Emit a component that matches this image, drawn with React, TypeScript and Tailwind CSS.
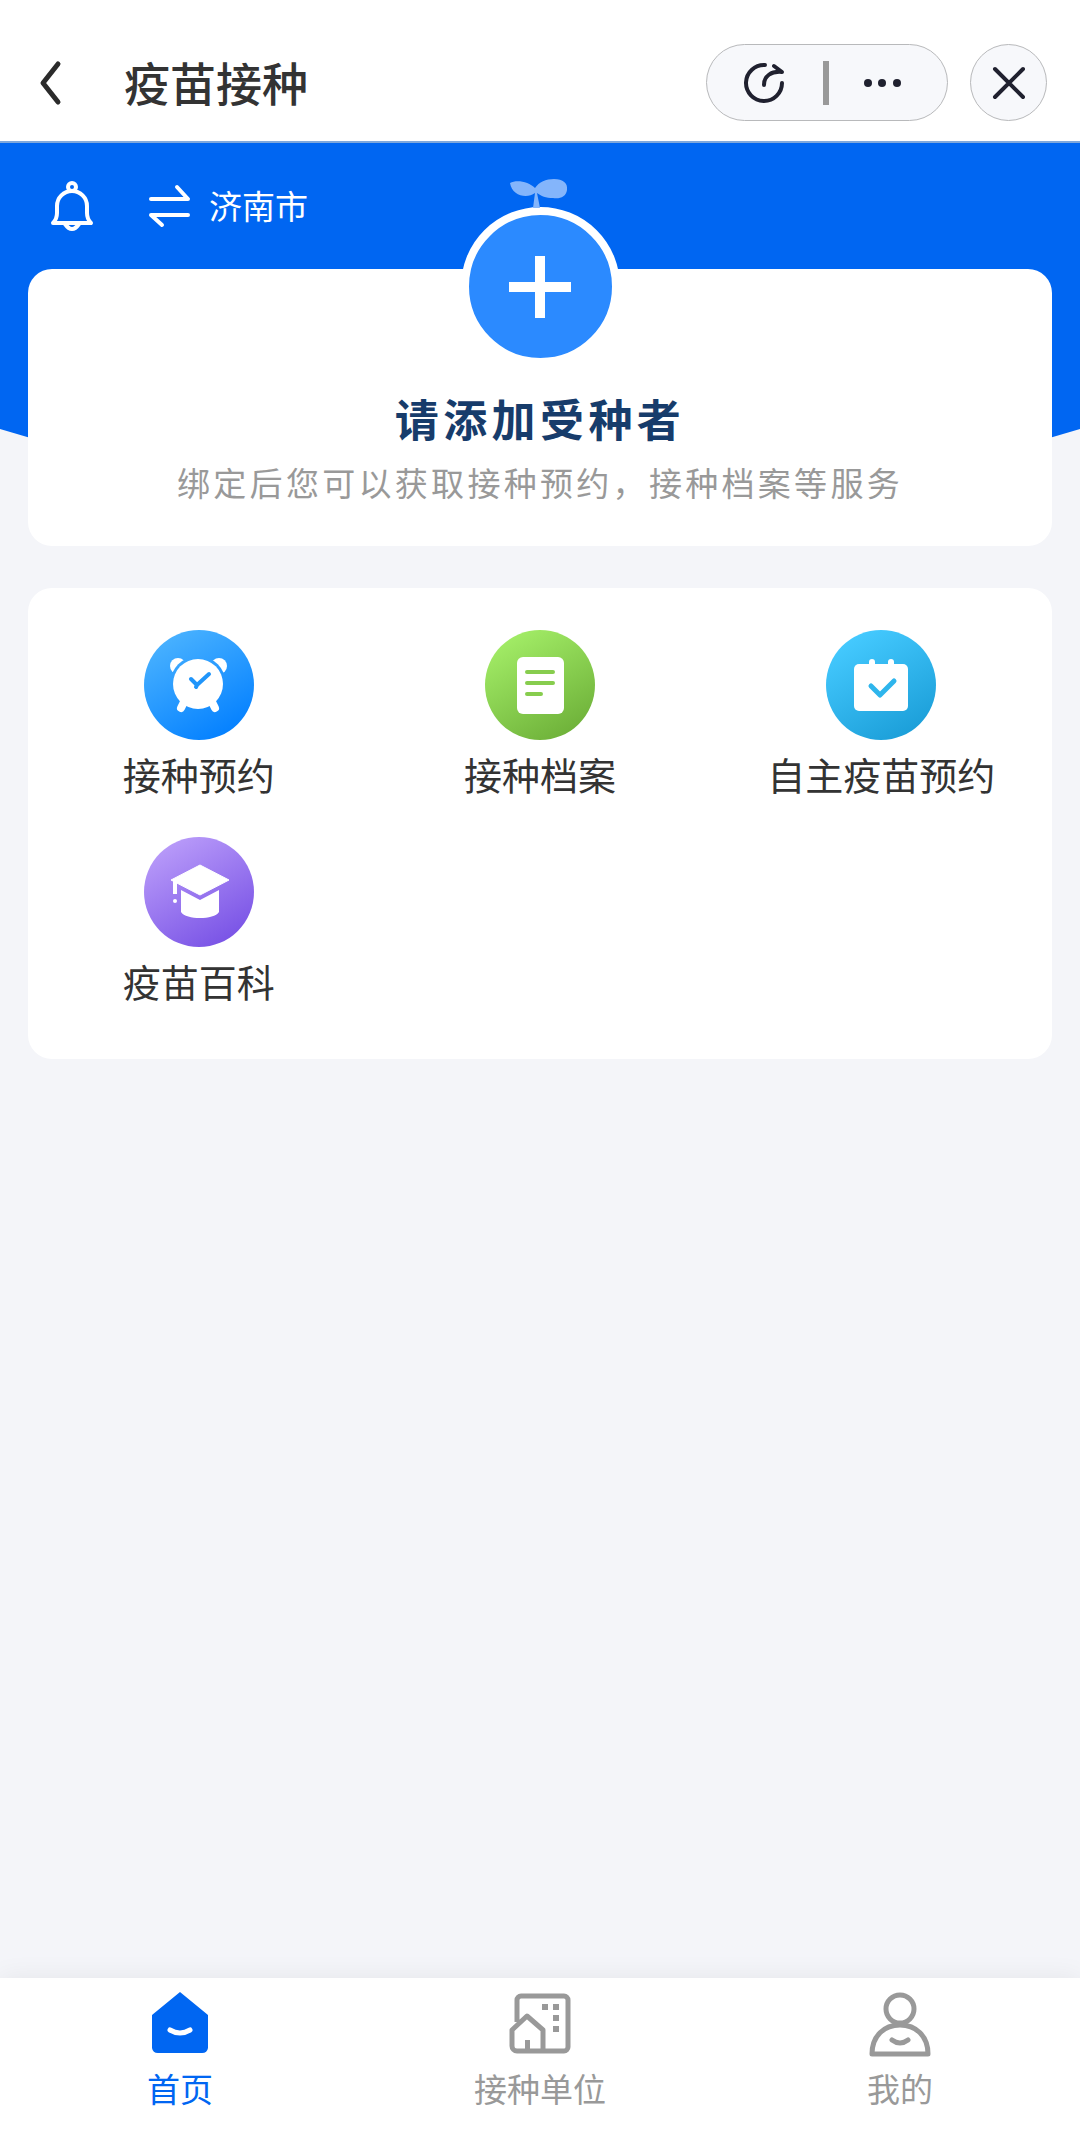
import React from "react";

const services = [
  {
    title: "接种预约",
    from: "#48b1ff",
    to: "#0581ff",
    icon: (
      <>
        <circle cx="34" cy="36" r="8" fill="#fff" />
        <circle cx="75" cy="36" r="8" fill="#fff" />
        <circle cx="54" cy="54" r="28" fill="url(#service-0)" />
        <path d="M41 70l-4 8M67 70l4 8" stroke="#fff" strokeWidth="8" strokeLinecap="round" />
        <circle cx="54" cy="54" r="25" fill="#fff" />
        <path d="M47 49l6 6 12-11M53 55l-1 2" stroke="#2095fa" strokeWidth="4" fill="none" strokeLinecap="round" strokeLinejoin="round" />
      </>
    ),
  },
  {
    title: "接种档案",
    from: "#a2ec66",
    to: "#6fb23a",
    icon: (
      <>
        <rect x="32" y="27" width="47" height="57" rx="6" fill="#fff" />
        <path d="M42 42h26M42 53h26M42 64h14" stroke="#87cd4e" strokeWidth="4" strokeLinecap="round" />
      </>
    ),
  },
  {
    title: "自主疫苗预约",
    from: "#45caff",
    to: "#1c9fd9",
    icon: (
      <>
        <rect x="28" y="34" width="54" height="47" rx="5" fill="#fff" />
        <path d="M46 36v-4M65 36v-4" stroke="#fff" strokeWidth="6" strokeLinecap="round" />
        <path d="M45 56l9 9 14-14" stroke="#2eb5ec" strokeWidth="5" fill="none" strokeLinecap="round" strokeLinejoin="round" />
      </>
    ),
  },
  {
    title: "疫苗百科",
    from: "#b89af9",
    to: "#7a54e6",
    icon: (
      <>
        <path d="M27 43l29-15 29 15-29 15z" fill="#fff" stroke="#fff" strokeLinejoin="round" />
        <path d="M37 53l19 10 19-10v22c-5 8-33 8-38 0z" fill="#fff" />
        <path d="M31 44v13" stroke="#fff" strokeWidth="4" />
        <circle cx="31" cy="64" r="2" fill="#fff" />
      </>
    ),
  },
];

const tabs = [
  {
    title: "首页",
    active: true,
    icon: (
      <>
        <path d="M32 2L60 25v33a6 6 0 0 1-6 5H10a6 6 0 0 1-6-5V25z" fill="currentColor" />
        <path d="M22 40q10 6 20 0" stroke="#fff" strokeWidth="5" fill="none" strokeLinecap="round" />
      </>
    ),
  },
  {
    title: "接种单位",
    active: false,
    icon: (
      <>
        <path
          d="M9 32V10a4 4 0 0 1 4-4h43a4 4 0 0 1 4 4v47a4 4 0 0 1-4 4H9a5 5 0 0 1-5-5V40l15-14 16 14v20"
          fill="none"
          stroke="currentColor"
          strokeWidth="5"
          strokeLinejoin="round"
        />
        <path d="M17 50h5v10h-5zM34 14h6v6h-6zM45 14h6v6h-6zM45 25h6v6h-6zM45 36h6v6h-6z" fill="currentColor" />
      </>
    ),
  },
  {
    title: "我的",
    active: false,
    icon: (
      <g fill="none" stroke="currentColor" strokeWidth="5" strokeLinecap="round" strokeLinejoin="round">
        <circle cx="32" cy="19" r="14" />
        <path d="M4 64c0-18 12-29 28-29s28 11 28 29zM24 50q8 6 16 0" />
      </g>
    ),
  },
];

const Header = () => (
  <header className="flex h-[143px] items-center border-b-2 border-[#7fa8dc] bg-white pt-6 pr-[33px] pl-9">
    <button type="button" aria-label="返回" className="w-[29px]">
      <svg width="29" height="48" viewBox="0 0 29 48" fill="none">
        <path d="M22 5L7 24l15 19" stroke="#2b2b2b" strokeWidth="5" strokeLinecap="round" strokeLinejoin="round" />
      </svg>
    </button>
    <h1 className="ml-[59px] flex-1 pb-1 text-[46px] leading-none font-medium text-[#333]">疫苗接种</h1>
    <div className="flex h-[77px] w-[242px] items-center rounded-full border border-[#b8b9bb] bg-[#f7f8fb] px-8">
      <button type="button" aria-label="刷新">
        <svg width="48" height="44" viewBox="0 0 48 44" fill="none" stroke="#20212f" strokeWidth="4" strokeLinecap="round" strokeLinejoin="round">
          <path d="M26 4a18 18 0 1 0 17 18M25 24c0-9 7-14 18-13l-8-6" />
        </svg>
      </button>
      <span className="ml-9 h-11 w-[6px] bg-[#999]" />
      <button type="button" aria-label="更多" className="ml-8">
        <svg width="44" height="44" viewBox="0 0 44 44" fill="#20212f">
          <circle cx="7" cy="22" r="4" />
          <circle cx="21" cy="22" r="4" />
          <circle cx="36" cy="22" r="4" />
        </svg>
      </button>
    </div>
    <button
      type="button"
      aria-label="关闭"
      className="ml-[22px] flex size-[77px] items-center justify-center rounded-full border border-[#b8b9bb] bg-[#f7f8fb]"
    >
      <svg width="36" height="36" viewBox="0 0 36 36" stroke="#20212f" strokeWidth="4" strokeLinecap="round">
        <path d="M4 4l28 28M32 4L4 32" />
      </svg>
    </button>
  </header>
);

const AddCard = () => (
  <div className="relative flex flex-col items-center rounded-3xl bg-white pb-[42px]">
    <svg className="absolute -top-[90px]" width="60" height="30" viewBox="0 0 60 30" fill="#84b5fb">
      <path d="M0 4C7 0 19 3 25 9C29 3 36 0 44 0C53 0 58 4 57 11C56 18 50 20 43 19C36 19 31 17 27 14L30 29H23L25 14C17 20 2 17 0 4z" />
    </svg>
    <button
      type="button"
      aria-label="添加受种者"
      className="-mt-[62px] flex size-[159px] items-center justify-center rounded-full border-8 border-white bg-[#2b8aff]"
    >
      <svg width="62" height="62" viewBox="0 0 62 62" fill="#fff">
        <path d="M26 0h10v26h26v10H36v26H26V36H0V26h26z" />
      </svg>
    </button>
    <h2 className="mt-6 text-[44px] leading-[56px] font-bold tracking-widest text-[#173c6b]">请添加受种者</h2>
    <p className="mt-[14px] text-[33px] leading-[44px] tracking-widest text-[#999]">
      绑定后您可以获取接种预约，接种档案等服务
    </p>
  </div>
);

const App = () => {
  return (
    <div className="flex min-h-screen flex-col bg-[#f4f5f9] font-['Noto_Sans_CJK_SC',sans-serif]">
      <Header />

      <main className="relative flex-1 px-7">
        <svg
          className="absolute inset-x-0 top-0 h-[380px] w-full"
          viewBox="0 0 1080 380"
          preserveAspectRatio="none"
          fill="#0066f2"
        >
          <path d="M0 0h1080v286Q540 450 0 286z" />
        </svg>

        <div className="relative flex h-[126px] items-center text-white">
          <button type="button" aria-label="消息" className="ml-[22px]">
            <svg width="44" height="52" viewBox="0 0 44 52" fill="none" stroke="#fff" strokeWidth="4" strokeLinecap="round" strokeLinejoin="round">
              <circle cx="22" cy="7" r="4" />
              <path d="M3 43q4-4 4-10v-7a15 15 0 0 1 30 0v7q0 6 4 10zM15 44q7 10 14 0" />
            </svg>
          </button>
          <button type="button" className="ml-[54px] flex items-center gap-[18px]">
            <svg width="43" height="44" viewBox="0 0 43 44" fill="none" stroke="#fff" strokeWidth="4" strokeLinecap="round" strokeLinejoin="round">
              <path d="M3 15h37L29 3M40 31H3l11 10" />
            </svg>
            <span className="pb-[2px] text-[33px] leading-none">济南市</span>
          </button>
        </div>

        <AddCard />

        <div className="mt-[42px] grid grid-cols-3 gap-y-[35px] rounded-3xl bg-white pt-[42px] pb-[50px]">
          {services.map((service, index) => (
            <a key={service.title} href="#" className="flex flex-col items-center gap-[6px] text-[38px] leading-[56px] text-[#333]">
              <svg width="110" height="110" viewBox="0 0 110 110" fill="none">
                <defs>
                  <linearGradient
                    id={`service-${index}`}
                    gradientUnits="userSpaceOnUse"
                    x1="22"
                    y1="8"
                    x2="80"
                    y2="106"
                  >
                    <stop stopColor={service.from} />
                    <stop offset="1" stopColor={service.to} />
                  </linearGradient>
                </defs>
                <circle cx="55" cy="55" r="55" fill={`url(#service-${index})`} />
                {service.icon}
              </svg>
              {service.title}
            </a>
          ))}
        </div>
      </main>

      <nav className="sticky bottom-0 grid h-[169px] grid-cols-3 bg-white pt-3 shadow-[0_-2px_24px_rgba(0,0,0,0.06)]">
        {tabs.map((tab) => (
          <a
            key={tab.title}
            href="#"
            className={`flex flex-col items-center gap-2 text-[33px] leading-[44px] ${
              tab.active ? "text-[#0066f2]" : "text-[#999]"
            }`}
          >
            <svg width="64" height="68" viewBox="0 0 64 68">
              {tab.icon}
            </svg>
            {tab.title}
          </a>
        ))}
      </nav>
    </div>
  );
};

export default App;
